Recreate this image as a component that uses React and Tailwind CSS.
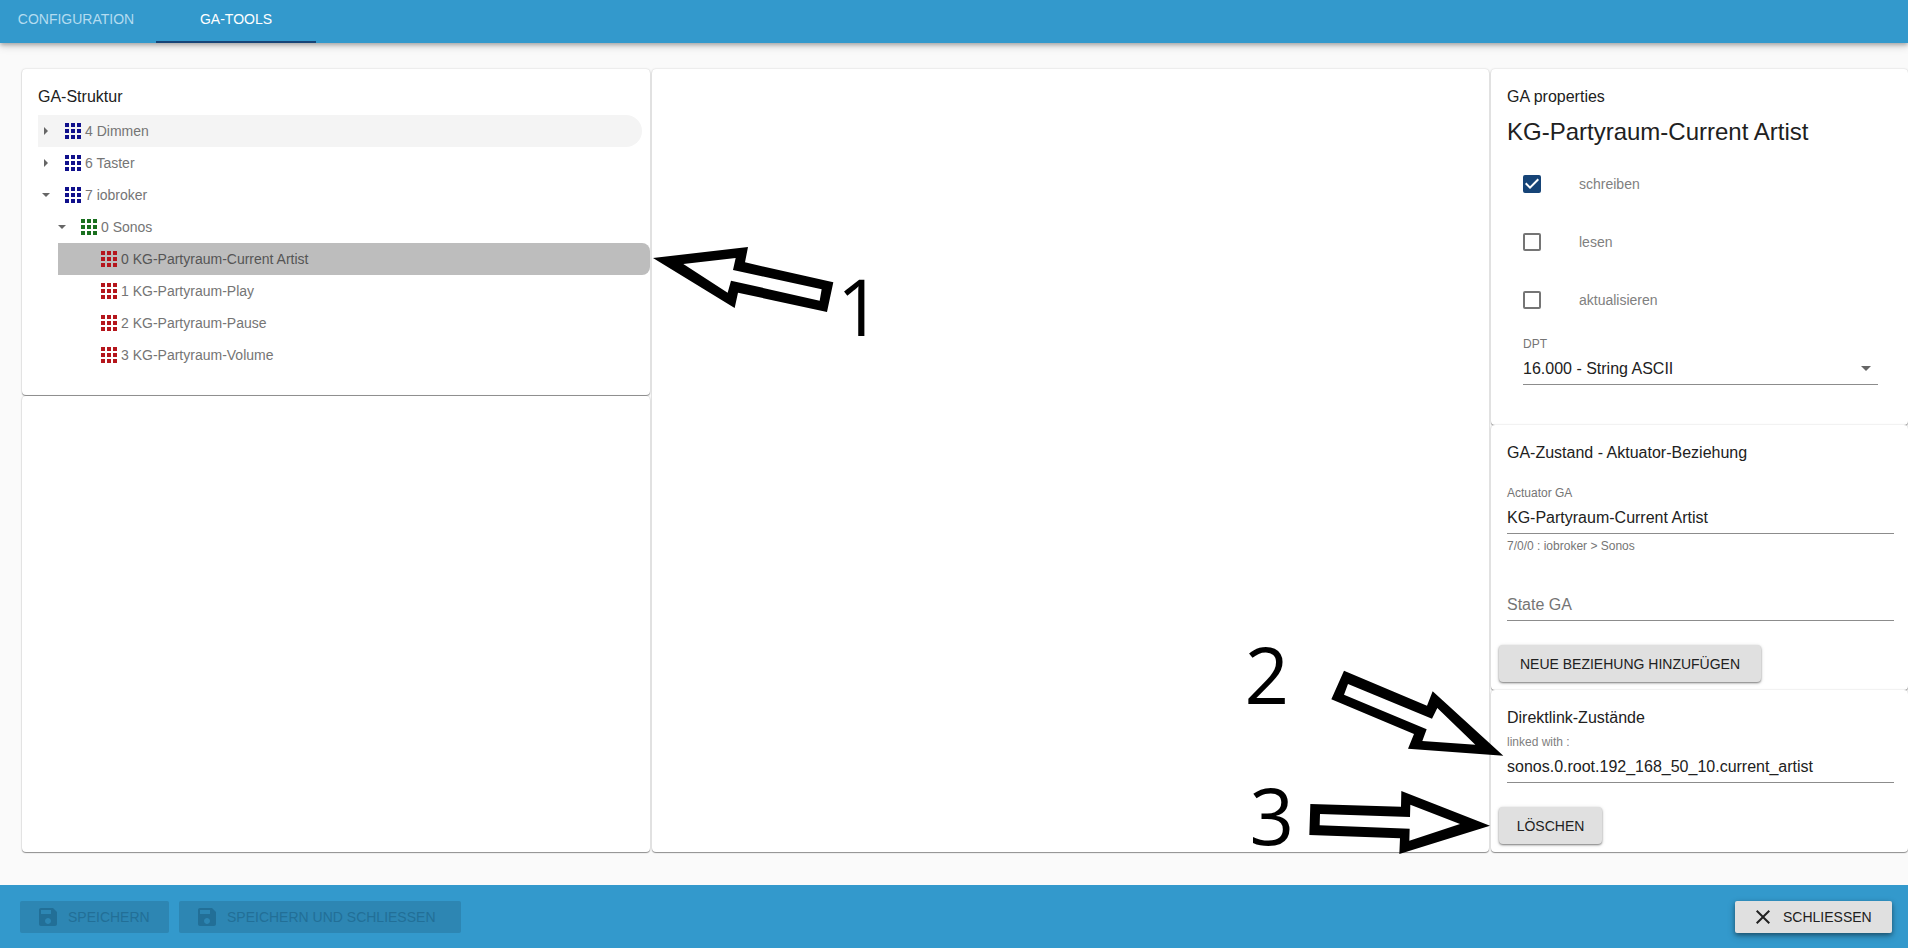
import { useState } from "react";

const field = "h-[33px] w-full border-b border-[#8c8c8c] bg-transparent pt-0.5 text-base text-[#212121] outline-none placeholder:text-[#757575]";

function GridIcon({ className }) {
  return (
    <svg viewBox="0 0 16 16" className={`h-4 w-4 shrink-0 fill-current ${className}`} aria-hidden="true">
      {[0, 6, 12].map((y) => [0, 6, 12].map((x) => <rect key={`${x}-${y}`} x={x} y={y} width="4" height="4" />))}
    </svg>
  );
}

function Caret({ open }) {
  return (
    <svg viewBox="0 0 16 16" className="h-4 w-4 shrink-0 fill-[#666]" aria-hidden="true">
      {open ? <path d="M4 6h8l-4 4z" /> : <path d="M6 4v8l4-4z" />}
    </svg>
  );
}

function SaveIcon() {
  return (
    <svg viewBox="0 0 24 24" className="h-6 w-6 fill-current" aria-hidden="true">
      <path d="M17 3H5c-1.11 0-2 .9-2 2v14c0 1.1.89 2 2 2h14c1.1 0 2-.9 2-2V7l-4-4zm-5 16c-1.66 0-3-1.34-3-3s1.34-3 3-3 3 1.34 3 3-1.34 3-3 3zm3-10H5V5h10v4z" />
    </svg>
  );
}

function CloseIcon() {
  return (
    <svg viewBox="0 0 24 24" className="h-6 w-6 fill-current" aria-hidden="true">
      <path d="M19 6.41L17.59 5 12 10.59 6.41 5 5 6.41 10.59 12 5 17.59 6.41 19 12 13.41 17.59 19 19 17.59 13.41 12z" />
    </svg>
  );
}

function Card({ className = "", children }) {
  return (
    <section className={`rounded bg-white shadow-[0_1px_1px_rgba(0,0,0,0.4),0_0_2px_rgba(0,0,0,0.2)] ${className}`}>
      {children}
    </section>
  );
}

function Branch({ label, open, hover, color, nested }) {
  return (
    <button
      type="button"
      aria-expanded={Boolean(open)}
      className={`mr-2 flex h-8 items-center rounded-r-full text-left text-sm text-[#757575] ${nested ? "ml-4" : ""} ${hover ? "bg-[#f4f4f4]" : ""}`}
    >
      <Caret open={open} />
      <span className="ml-[11px] flex items-center gap-1">
        <GridIcon className={color} />
        {label}
      </span>
    </button>
  );
}

function Leaf({ label, selected, onClick }) {
  return (
    <button
      type="button"
      onClick={onClick}
      className={`ml-5 flex h-8 items-center gap-1 rounded-r-lg pl-[43px] text-left text-sm ${selected ? "bg-[#bdbdbd] text-[#555]" : "text-[#757575]"}`}
    >
      <GridIcon className="text-[#b5161c]" />
      {label}
    </button>
  );
}

function Check({ id, label, initial }) {
  const [on, setOn] = useState(initial);
  return (
    <div className="flex h-[58px] items-center gap-[38px]">
      <span className="relative flex">
        <input
          id={id}
          type="checkbox"
          checked={on}
          onChange={() => setOn(!on)}
          className="h-[18px] w-[18px] appearance-none rounded-xs border-2 border-[#757575] checked:border-[#164477] checked:bg-[#164477]"
        />
        {on && (
          <svg viewBox="0 0 18 18" className="pointer-events-none absolute inset-0 fill-white" aria-hidden="true">
            <path d="M7 14L2 9l1.41-1.41L7 11.17l7.59-7.59L16 5z" />
          </svg>
        )}
      </span>
      <label htmlFor={id} className="text-sm text-[#808080]">{label}</label>
    </div>
  );
}

const grayButton =
  "h-[37px] rounded bg-[#e0e0e0] text-sm text-[#212121] shadow-[0_1px_2px_rgba(0,0,0,0.45),0_1px_4px_rgba(0,0,0,0.15)]";
const disabledButton =
  "flex h-8 items-center gap-2 rounded-xs bg-[#2d86b3] pl-4 text-sm text-[#226f97]";
const digit = "absolute font-['Open_Sans',sans-serif] text-[78px] leading-none text-black";

const leaves = [
  "0 KG-Partyraum-Current Artist",
  "1 KG-Partyraum-Play",
  "2 KG-Partyraum-Pause",
  "3 KG-Partyraum-Volume",
];

export default function App() {
  const [selected, setSelected] = useState(0);
  return (
    <div className="flex min-h-screen flex-col overflow-x-hidden bg-[#fafafa] font-['Liberation_Sans',Arial,sans-serif] text-[#212121]">
      <header className="z-10 bg-[#3399cc] shadow-[0_2px_4px_rgba(0,0,0,0.25),0_4px_8px_rgba(0,0,0,0.12)]">
        <nav className="flex h-[43px] text-sm">
          <button type="button" className="w-[156px] pr-1 pb-1.5 text-[#b3dcf0]">CONFIGURATION</button>
          <button type="button" className="w-40 border-b-2 border-[#164477] pb-1 text-white">GA-TOOLS</button>
        </nav>
      </header>

      <main className="grid flex-1 grid-cols-[628fr_837fr_417fr] gap-x-0.5 pt-[26px] pb-[33px] pl-[22px]">
        <div className="flex flex-col gap-px">
          <Card className="overflow-hidden pt-4 pb-6 pl-4">
            <h2 className="pb-1.5 text-base">GA-Struktur</h2>
            <div className="flex flex-col">
              <Branch label="4 Dimmen" hover color="text-[#10108c]" />
              <Branch label="6 Taster" color="text-[#10108c]" />
              <Branch label="7 iobroker" open color="text-[#10108c]" />
              <Branch label="0 Sonos" open nested color="text-[#1a701f]" />
              {leaves.map((label, i) => (
                <Leaf key={label} label={label} selected={i === selected} onClick={() => setSelected(i)} />
              ))}
            </div>
          </Card>
          <Card className="flex-1" />
        </div>

        <div className="relative z-10 flex">
          <Card className="flex-1" />
          <svg viewBox="273 549 561 219" className="absolute top-[174px] left-0 h-[73px] w-[187px]" aria-hidden="true">
            <path
              fillRule="evenodd"
              d="M276 594L561 561 552 607 817 667 798 756 531 698 521 744zM367 612L500 698 510 662 776 722 782 688 516 630 524 594z"
            />
          </svg>
          <span className={`${digit} top-[198px] left-[185px]`}>1</span>
          <span className={`${digit} top-[566px] right-[200px]`}>2</span>
          <svg viewBox="300 120 522 261" className="absolute top-[601px] right-[-15px] h-[87px] w-[174px]" aria-hidden="true">
            <path
              fillRule="evenodd"
              d="M342 122L591 227 608 184 820 377 534 356 552 312 304 208zM354 162L342 194 590 298 577 333 736 344 622 234 606 266z"
            />
          </svg>
          <span className={`${digit} top-[707px] right-[195px]`}>3</span>
          <svg viewBox="234 480 549 195" className="absolute top-[721px] right-[-2px] h-[65px] w-[183px]" aria-hidden="true">
            <path
              fillRule="evenodd"
              d="M241 522L513 530 514 483 780 587 508 672 510 625 238 615zM270 552L269 586 539 596 538 632 690 582 541 524 540 561z"
            />
          </svg>
        </div>

        <div className="flex flex-col">
          <Card className="pt-4 pr-[30px] pb-10 pl-4">
            <h2 className="text-base">GA properties</h2>
            <h1 className="pt-[7px] text-2xl">KG-Partyraum-Current Artist</h1>
            <div className="flex flex-col pt-[7px] pl-4">
              <Check id="write" label="schreiben" initial />
              <Check id="read" label="lesen" initial={false} />
              <Check id="update" label="aktualisieren" initial={false} />
              <label htmlFor="dpt" className="pt-[7px] text-xs text-[#757575]">DPT</label>
              <div className="relative flex">
                <select id="dpt" className={`${field} appearance-none`}>
                  <option>16.000 - String ASCII</option>
                </select>
                <svg viewBox="0 0 24 24" className="pointer-events-none absolute top-1 right-0 h-6 w-6 fill-[#666]" aria-hidden="true">
                  <path d="M7 10l5 5 5-5z" />
                </svg>
              </div>
            </div>
          </Card>

          <Card className="relative flex flex-col items-start pt-4 pr-3.5 pb-2 pl-4">
            <h2 className="text-base">GA-Zustand - Aktuator-Beziehung</h2>
            <label htmlFor="actuator" className="pt-5 text-xs text-[#757575]">Actuator GA</label>
            <input id="actuator" readOnly value="KG-Partyraum-Current Artist" className={field} />
            <p className="pt-1 text-xs text-[#757575]">7/0/0 : iobroker &gt; Sonos</p>
            <input aria-label="State GA" placeholder="State GA" className={`${field} mt-[34px]`} />
            <button type="button" className={`${grayButton} mt-6 -ml-2 w-[262px]`}>NEUE BEZIEHUNG HINZUFÜGEN</button>
          </Card>

          <Card className="relative flex flex-1 flex-col items-start pt-4 pr-3.5 pb-2 pl-4">
            <h2 className="text-base">Direktlink-Zustände</h2>
            <label htmlFor="linked" className="pt-1 text-xs text-[#808080]">linked with :</label>
            <input id="linked" readOnly value="sonos.0.root.192_168_50_10.current_artist" className={field} />
            <button type="button" className={`${grayButton} mt-6 -ml-2 w-[103px]`}>LÖSCHEN</button>
          </Card>
        </div>
      </main>

      <footer className="flex items-start gap-2.5 bg-[#3399cc] pt-4 pr-4 pb-[15px] pl-5">
        <button type="button" disabled className={`${disabledButton} w-[149px]`}><SaveIcon />SPEICHERN</button>
        <button type="button" disabled className={`${disabledButton} w-[282px]`}><SaveIcon />SPEICHERN UND SCHLIESSEN</button>
        <button
          type="button"
          className="ml-auto flex h-8 w-[157px] items-center gap-2 rounded-xs bg-[#e0e0e0] pl-4 text-sm text-[#212121] shadow-[0_2px_4px_rgba(0,0,0,0.35),0_3px_8px_rgba(0,0,0,0.2)]"
        >
          <CloseIcon />SCHLIESSEN
        </button>
      </footer>
    </div>
  );
}
